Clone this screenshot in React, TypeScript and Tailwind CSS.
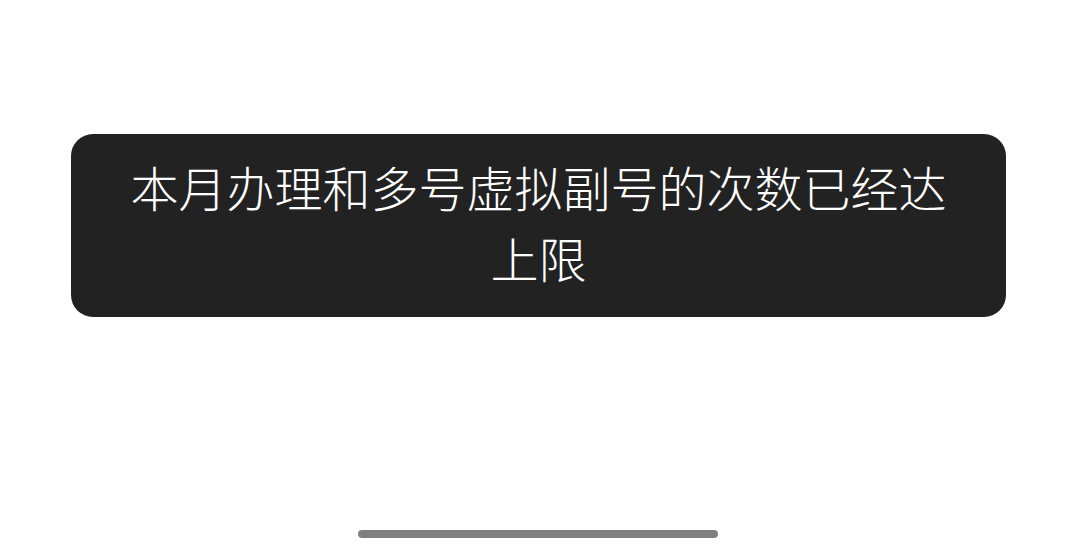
export default function App() {
  return (
    <div
      className="w-[1065px] h-[545px] bg-white flex flex-col items-start"
      style={{ fontFamily: '"Noto Sans CJK SC", sans-serif' }}
    >
      <div className="mt-[134px] ml-[71px] w-[935px] h-[183px] rounded-[22px] bg-[#222222] flex items-center justify-center px-[48px] pb-[8px]">
        <p className="text-white text-[48px] font-light leading-[71px] text-center">
          本月办理和多号虚拟副号的次数已经达上限
        </p>
      </div>
      <div className="mt-auto mb-[7px] ml-[358px] w-[360px] h-[8px] rounded-full bg-[#808080]" />
    </div>
  );
}
